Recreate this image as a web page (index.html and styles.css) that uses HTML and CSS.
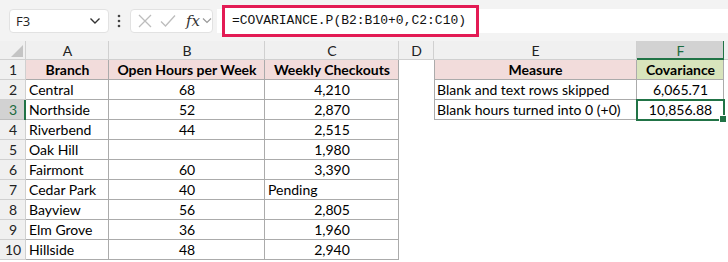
FILE: index.html
```html
<!DOCTYPE html>
<html>
<head>
<meta charset="utf-8">
<link rel="stylesheet" href="styles.css">
</head>
<body>
<div class="toolbar">
  <div class="namebox">
    <span class="ref">F3</span>
    <svg class="chev" width="12" height="8" viewBox="0 0 12 8"><path d="M1.5 1.5 L6 6 L10.5 1.5" fill="none" stroke="#333" stroke-width="1.4"/></svg>
  </div>
  <svg class="dots" width="4" height="14" viewBox="0 0 4 14"><circle cx="2" cy="2" r="1.3" fill="#444"/><circle cx="2" cy="7" r="1.3" fill="#444"/><circle cx="2" cy="12" r="1.3" fill="#444"/></svg>
  <div class="fxbox">
    <svg width="14" height="14" viewBox="0 0 14 14"><path d="M1 1 L13 13 M13 1 L1 13" stroke="#bdbdbd" stroke-width="1.3"/></svg>
    <svg width="16" height="14" viewBox="0 0 16 14"><path d="M1 7.5 L5.5 12 L15 1.5" fill="none" stroke="#bdbdbd" stroke-width="1.3"/></svg>
    <span class="fx">fx</span>
    <svg class="chev2" width="10" height="7" viewBox="0 0 10 7"><path d="M1 1.5 L5 5.5 L9 1.5" fill="none" stroke="#999" stroke-width="1.2"/></svg>
  </div>
  <div class="formula">
    <span class="hl">=COVARIANCE.P(B2:B10+0,C2:C10)</span>
  </div>
</div>
<div class="sheet">
  <div class="ch corner"><svg width="12" height="12" viewBox="0 0 12 12"><path d="M12 0 L12 12 L0 12 Z" fill="#c4c4c4"/></svg></div>
  <div class="ch">A</div><div class="ch">B</div><div class="ch">C</div><div class="ch">D</div><div class="ch">E</div><div class="ch sel">F</div><div class="ch end"></div>

  <div class="rh">1</div>
  <div class="t hd ctr b">Branch</div><div class="t hd ctr b">Open Hours per Week</div><div class="t hd ctr b">Weekly Checkouts</div>
  <div class="c"></div>
  <div class="t hd ctr b l">Measure</div><div class="t hdg ctr b">Covariance</div><div class="c"></div>

  <div class="rh">2</div>
  <div class="t">Central</div><div class="t ctr">68</div><div class="t ctr">4,210</div>
  <div class="c"></div>
  <div class="t l">Blank and text rows skipped</div><div class="t ctr">6,065.71</div><div class="c"></div>

  <div class="rh rsel">3</div>
  <div class="t">Northside</div><div class="t ctr">52</div><div class="t ctr">2,870</div>
  <div class="c"></div>
  <div class="t l">Blank hours turned into 0 (+0)</div><div class="t ctr active">10,856.88</div><div class="c"></div>

  <div class="rh">4</div>
  <div class="t">Riverbend</div><div class="t ctr">44</div><div class="t ctr">2,515</div>
  <div class="c"></div><div class="c"></div><div class="c"></div><div class="c"></div>

  <div class="rh">5</div>
  <div class="t">Oak Hill</div><div class="t ctr"></div><div class="t ctr">1,980</div>
  <div class="c"></div><div class="c"></div><div class="c"></div><div class="c"></div>

  <div class="rh">6</div>
  <div class="t">Fairmont</div><div class="t ctr">60</div><div class="t ctr">3,390</div>
  <div class="c"></div><div class="c"></div><div class="c"></div><div class="c"></div>

  <div class="rh">7</div>
  <div class="t">Cedar Park</div><div class="t ctr">40</div><div class="t">Pending</div>
  <div class="c"></div><div class="c"></div><div class="c"></div><div class="c"></div>

  <div class="rh">8</div>
  <div class="t">Bayview</div><div class="t ctr">56</div><div class="t ctr">2,805</div>
  <div class="c"></div><div class="c"></div><div class="c"></div><div class="c"></div>

  <div class="rh">9</div>
  <div class="t">Elm Grove</div><div class="t ctr">36</div><div class="t ctr">1,960</div>
  <div class="c"></div><div class="c"></div><div class="c"></div><div class="c"></div>

  <div class="rh">10</div>
  <div class="t">Hillside</div><div class="t ctr">48</div><div class="t ctr">2,940</div>
  <div class="c"></div><div class="c"></div><div class="c"></div><div class="c"></div>
</div>
</body>
</html>
```

FILE: styles.css
```css
* { box-sizing: border-box; }
html, body { margin: 0; padding: 0; background: #ffffff; }
body { width: 728px; height: 262px; overflow: hidden; font-family: "Lato", "Liberation Sans", sans-serif; }

.toolbar {
  height: 41px;
  background: #f3f3f3;
  display: flex;
  align-items: center;
  padding-left: 9px;
}
.namebox {
  width: 100px;
  height: 24px;
  background: #fff;
  border: 1px solid #e2e2e2;
  border-radius: 4px;
  display: flex;
  align-items: center;
  justify-content: space-between;
  padding: 0 7px 0 6px;
  font-family: "Open Sans", "Liberation Sans", sans-serif;
  font-size: 13px;
  color: #222;
}
.dots { margin-left: 8px; margin-right: 9px; }
.fxbox {
  width: 83px;
  height: 24px;
  background: #fff;
  border: 1px solid #e2e2e2;
  border-radius: 4px;
  display: flex;
  align-items: center;
  padding-left: 7px;
  gap: 8px;
}
.fx {
  font-family: "DejaVu Serif", "Liberation Serif", serif;
  font-style: italic;
  font-size: 15px;
  color: #333;
  margin-left: 2px;
}
.chev2 { margin-left: -6px; }
.formula {
  margin-left: 4px;
  flex: 1;
  height: 24px;
  background: #fff;
  display: flex;
  align-items: center;
}
.hl {
  margin-left: 5px;
  width: 257px;
  height: 32px;
  border: 3px solid #e31b54;
  display: flex;
  align-items: center;
  padding-left: 7px;
  font-family: "Liberation Mono", monospace;
  font-size: 13px;
  color: #111;
  background: #fff;
}

.sheet {
  display: grid;
  grid-template-columns: 26px 83px 156px 134px 35px 203px 87px 1fr;
  grid-template-rows: 19px repeat(10, 20px);
  font-size: 14px;
  color: #000;
}
.sheet > div {
  display: flex;
  align-items: center;
  white-space: nowrap;
  overflow: visible;
  line-height: 1;
}
.ch {
  background: #f0f0f0;
  justify-content: center;
  color: #222;
  box-shadow: inset -1px -1px 0 #d0d0d0;
  font-size: 14px;
}
.ch.corner { justify-content: flex-end; align-items: flex-end !important; padding: 0 3px 3px 0; }
.ch.end { box-shadow: inset 0 -1px 0 #d0d0d0; }
.ch.sel {
  background: #d2d2d2;
  color: #1d6b3f;
  box-shadow: inset -1px -2px 0 #217346;
}
.rh {
  background: #f0f0f0;
  justify-content: center;
  color: #222;
  box-shadow: inset -1px -1px 0 #d0d0d0;
}
.rh.rsel {
  background: #d2d2d2;
  color: #1d6b3f;
  box-shadow: inset -2px 0 0 #217346, inset 0 -1px 0 #bcbcbc;
}
.c { background: #fff; }
.t {
  background: #fff;
  padding-left: 3px;
  box-shadow: inset -1px -1px 0 #ababab;
}
.t.l { box-shadow: inset -1px -1px 0 #ababab, inset 1px 0 0 #ababab; }
.t.ctr { justify-content: center; padding-left: 0; }
.t.hd { background: #f2dcdb; }
.t.hdg { background: #d8e4bc; }
.b { font-weight: 700; }
.active { position: relative; }
.active::after {
  content: "";
  position: absolute;
  left: -1px; top: -1px; right: -1px; bottom: -1px;
  border: 2px solid #217346;
}
.active::before {
  content: "";
  position: absolute;
  right: -3px; bottom: -3px;
  width: 6px; height: 6px;
  background: #217346;
  border: 1px solid #fff;
  z-index: 2;
}
```
